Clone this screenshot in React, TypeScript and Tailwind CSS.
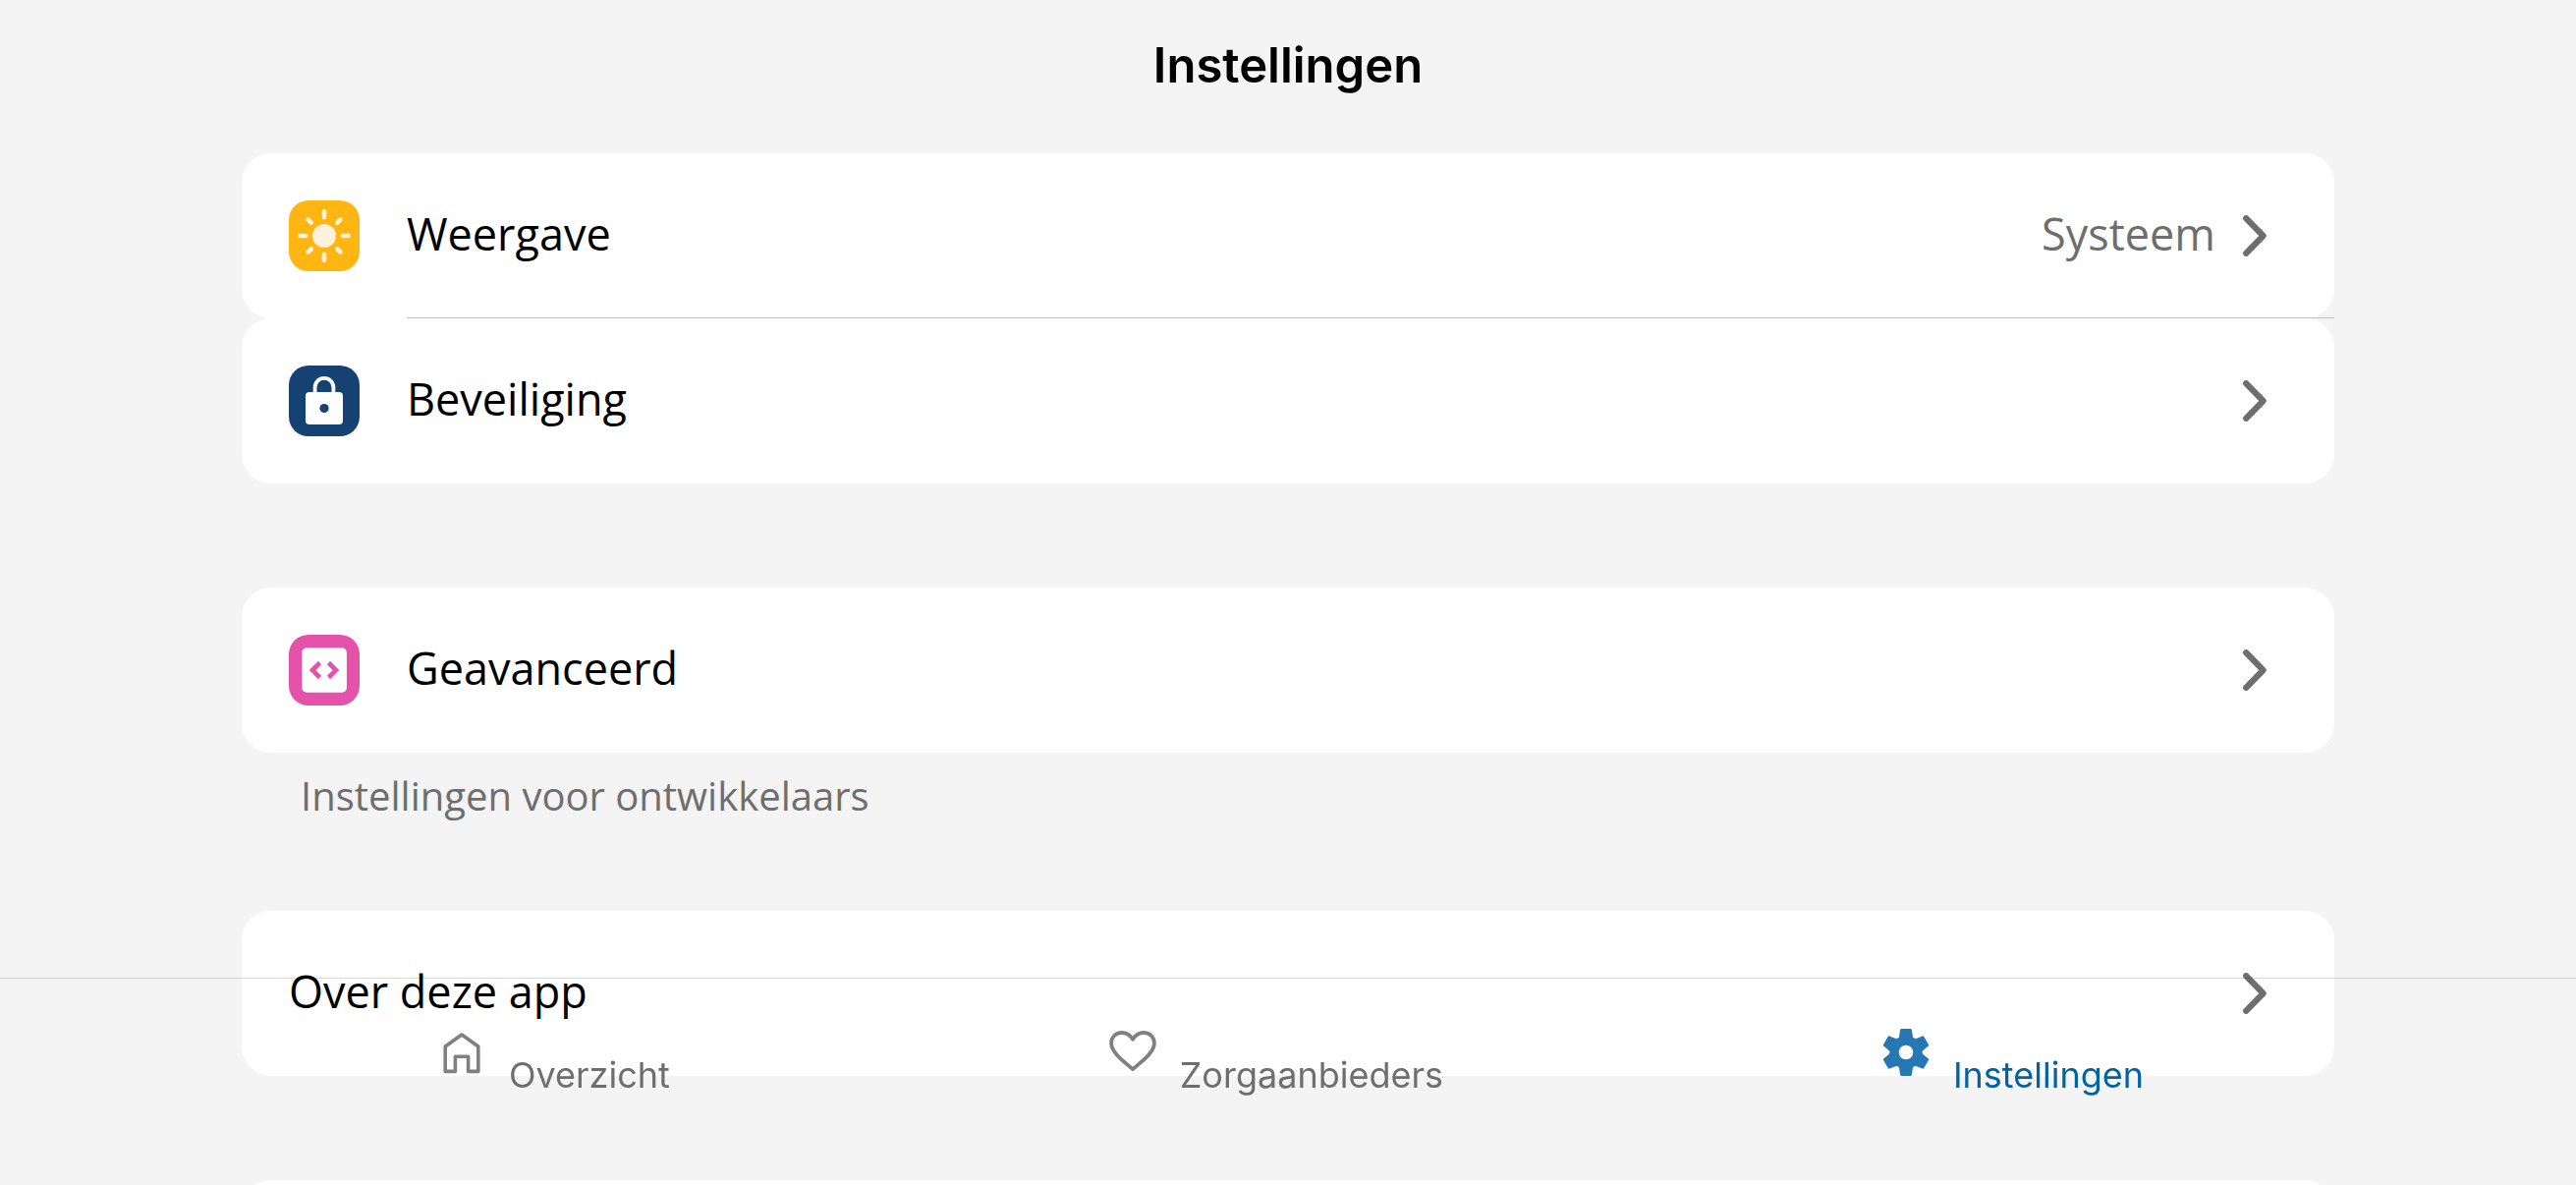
import type { ReactNode } from "react";

function SunTile() {
  return (
    <svg viewBox="0 0 72 72" className="size-[72px] shrink-0" aria-hidden="true">
      <rect width="72" height="72" rx="20" fill="#FFB612" />
      <circle cx="36" cy="36" r="12" fill="#FFF1DB" />
      <g stroke="#FFF1DB" strokeWidth="4.6" strokeLinecap="round">
        <path d="M36 11.3v5.8M36 54.9v5.8M11.3 36h5.8M54.9 36h5.8" />
        <path d="M19.7 19.7l3 3M52.3 19.7l-3 3M19.7 52.3l3-3M52.3 52.3l-3-3" />
      </g>
    </svg>
  );
}

function LockTile() {
  return (
    <svg viewBox="0 0 72 72" className="size-[72px] shrink-0" aria-hidden="true">
      <rect width="72" height="72" rx="20" fill="#154273" />
      <path d="M26.6 29v-6.7a9.4 9.4 0 0 1 18.8 0V29" fill="none" stroke="#fff" strokeWidth="3.8" />
      <rect x="17" y="27" width="38" height="33" rx="4" fill="#fff" />
      <circle cx="36" cy="43.5" r="4.6" fill="#154273" />
    </svg>
  );
}

function CodeTile() {
  return (
    <svg viewBox="0 0 72 72" className="size-[72px] shrink-0" aria-hidden="true">
      <rect width="72" height="72" rx="20" fill="#E552AA" />
      <rect x="13.3" y="13.2" width="45.6" height="45.6" rx="5" fill="#fff" />
      <path d="M31.5 28.5L24 36l7.5 7.5M40.5 28.5L48 36l-7.5 7.5" fill="none" stroke="#E552AA" strokeWidth="4.6" />
    </svg>
  );
}

function Chevron() {
  return (
    <svg viewBox="0 0 24 42" className="h-[42px] w-6 shrink-0" aria-hidden="true">
      <path d="M3.2 3.2L20.6 21L3.2 38.8" fill="none" stroke="#6E6E6E" strokeWidth="6.2" strokeLinecap="round" strokeLinejoin="round" />
    </svg>
  );
}

function HomeIcon() {
  return (
    <svg viewBox="0 0 48 48" className="size-12" fill="none" stroke="#808080" strokeWidth="3.6" strokeLinejoin="round" aria-hidden="true">
      <path d="M24 6L40.8 18v25.4H30.6V28.3H17.4v15.1H7.2V18z" />
    </svg>
  );
}

function HeartIcon() {
  return (
    <svg viewBox="0 0 48 48" className="size-12" fill="none" stroke="#808080" strokeWidth="3.8" strokeLinejoin="round" aria-hidden="true">
      <path d="M24 41.2C16 34 2.1 24.5 2.1 14.5C2.1 8.5 6.8 4 12.8 4C17.8 4 21.5 6.500 24 10.8C26.5 6.5 30.2 4 35.2 4C41.2 4 45.9 8.5 45.9 14.5C45.9 24.5 32 34 24 41.2z" />
    </svg>
  );
}

function GearIcon() {
  return (
    <svg viewBox="0 0 48 48" className="size-12" aria-hidden="true">
      <g fill="#2678B2" stroke="#2678B2" strokeWidth="3" strokeLinejoin="round">
        {[0, 60, 120, 180, 240, 300].map((a) => (
          <path key={a} d="M19.5 1.6h9l1.8 12h-12.6z" transform={`rotate(${a} 24 24)`} />
        ))}
      </g>
      <circle cx="24" cy="24" r="12" fill="none" stroke="#2678B2" strokeWidth="9.4" />
    </svg>
  );
}

function Row({ label, icon, value }: { label: string; icon?: ReactNode; value?: string }) {
  return (
    <button type="button" className="flex h-[168px] w-full items-center gap-12 rounded-[30px] bg-white pr-[69px] pl-12 text-left">
      {icon}
      <span className="grow pb-1 text-[45px] leading-[60px] text-black">{label}</span>
      <span className="flex items-center gap-7">
        {value && <span className="pb-1 text-[45px] leading-[60px] text-[#6E6E6E]">{value}</span>}
        <Chevron />
      </span>
    </button>
  );
}

function Tab({ label, icon, active }: { label: string; icon: ReactNode; active?: boolean }) {
  return (
    <a href="#" aria-current={active ? "page" : undefined} className={active ? "flex gap-6 text-[#0162A6]" : "flex gap-6 text-[#6E6E6E]"}>
      {icon}
      <span className="pt-[29px] text-[36px] leading-9">{label}</span>
    </a>
  );
}

export default function App() {
  return (
    <div className="h-screen overflow-hidden bg-[#F4F4F4] font-['Open_Sans',sans-serif]">
      <header className="flex h-[156px] justify-center pt-[37px]">
        <h1 className="font-['Inter',sans-serif] text-[49px] leading-[60px] font-semibold text-black">Instellingen</h1>
      </header>
      <main className="mx-[246px]">
        <section className="relative">
          <Row label="Weergave" icon={<SunTile />} value="Systeem" />
          <div className="absolute top-[167px] right-0 left-[168px] h-px bg-[#C0C1C1]" />
          <Row label="Beveiliging" icon={<LockTile />} />
        </section>
        <section className="pt-[106px]">
          <Row label="Geavanceerd" icon={<CodeTile />} />
          <p className="px-[60px] pt-4 text-[40px] leading-[55px] text-[#6E6E6E]">Instellingen voor ontwikkelaars</p>
        </section>
        <section className="pt-[90px]">
          <Row label="Over deze app" />
        </section>
        <section className="pt-[106px]">
          <Row label="" />
        </section>
      </main>
      <nav className="fixed inset-x-0 bottom-0 flex h-[211px] justify-between border-t border-black/15 pt-[51px] pr-[440px] pl-[446px] font-['Inter',sans-serif]">
        <Tab label="Overzicht" icon={<HomeIcon />} />
        <Tab label="Zorgaanbieders" icon={<HeartIcon />} />
        <Tab label="Instellingen" icon={<GearIcon />} active />
      </nav>
    </div>
  );
}
